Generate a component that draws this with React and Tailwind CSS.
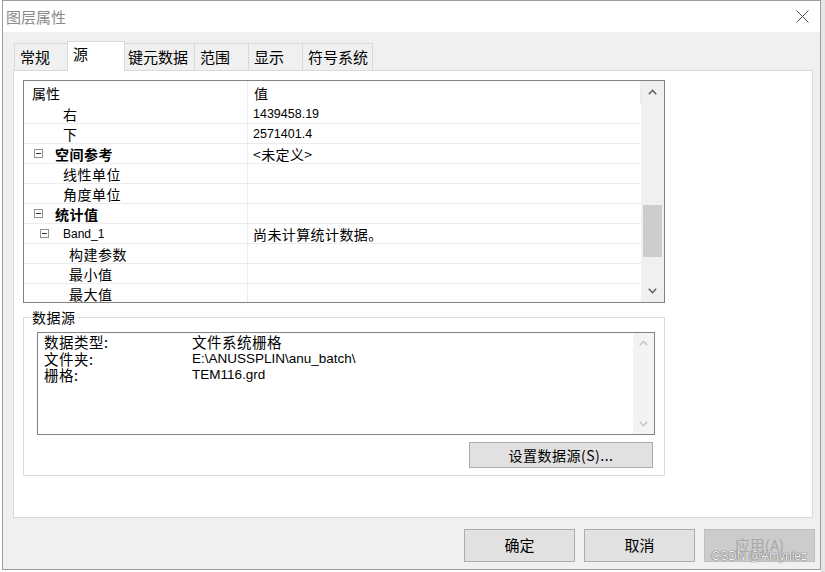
import React from "react";

const CJK = "font-['Noto_Sans_CJK_SC','Liberation_Sans',sans-serif]";
const LAT = "font-['Liberation_Sans','Noto_Sans_CJK_SC',sans-serif]";

function Chevron({ up, color = "#606060" }) {
  return (
    <svg width="9" height="6" viewBox="0 0 9 6">
      <path
        d={up ? "M0.8 5.2 L4.5 1.3 L8.2 5.2" : "M0.8 0.8 L4.5 4.7 L8.2 0.8"}
        fill="none"
        stroke={color}
        strokeWidth="1.6"
      />
    </svg>
  );
}

function MinusBox() {
  return (
    <div className="w-[9px] h-[9px] border border-[#919191] bg-white flex items-center justify-center shrink-0">
      <div className="w-[5px] h-px bg-[#333]" />
    </div>
  );
}

const rows = [
  { label: "右", pad: "pl-[39px]", value: "1439458.19", num: true },
  { label: "下", pad: "pl-[39px]", value: "2571401.4", num: true },
  { label: "空间参考", box: "pl-[10px]", gap: "ml-[12px]", bold: true, value: "<未定义>" },
  { label: "线性单位", pad: "pl-[39px]" },
  { label: "角度单位", pad: "pl-[39px]" },
  { label: "统计值", box: "pl-[10px]", gap: "ml-[12px]", bold: true },
  { label: "Band_1", box: "pl-[16px]", gap: "ml-[14px]", latin: true, value: "尚未计算统计数据。" },
  { label: "构建参数", pad: "pl-[45px]" },
  { label: "最小值", pad: "pl-[45px]" },
  { label: "最大值", pad: "pl-[45px]" },
];

function Row({ r }) {
  const labelCls = r.latin
    ? `${LAT} text-[12px]`
    : `${CJK} text-[14px] tracking-[0.5px] ${r.bold ? "font-bold" : ""}`;
  return (
    <div className="flex h-[20px] border-b border-[#ececec] shrink-0">
      <div
        className={`w-[224px] shrink-0 border-r border-[#ececec] flex items-center ${
          r.box ? r.box : r.pad
        }`}
      >
        {r.box ? <MinusBox /> : null}
        <span className={`${labelCls} leading-[20px] text-black ${r.box ? r.gap : ""}`}>
          {r.label}
        </span>
      </div>
      <div className="flex-1 flex items-center pl-[5px]">
        {r.value ? (
          <span
            className={`${
              r.num ? `${LAT} text-[12.5px]` : `${CJK} text-[14px] tracking-[0.4px]`
            } leading-[20px] text-black`}
          >
            {r.value}
          </span>
        ) : null}
      </div>
    </div>
  );
}

function Tab({ w, pl, selected, children }) {
  if (selected) {
    return (
      <div
        className={`${w} ${pl} h-[30px] -mb-px -ml-px bg-white border border-b-0 border-[#d9d9d9] flex items-start pt-[2px] ${CJK} text-[15px] leading-[20px] text-black relative z-10`}
      >
        {children}
      </div>
    );
  }
  return (
    <div
      className={`${w} ${pl} h-[27px] -ml-px bg-[#f0f0f0] border border-b-0 border-[#d9d9d9] flex items-center ${CJK} text-[15px] leading-[20px] text-black`}
    >
      {children}
    </div>
  );
}

function Btn({ children, disabled }) {
  return (
    <div
      className={`w-[111px] h-[33px] border flex items-center justify-center ${CJK} text-[15px] ${
        disabled
          ? "bg-[#cccccc] border-[#bfbfbf] text-[#a8a8a8]"
          : "bg-[#e1e1e1] border-[#adadad] text-black"
      }`}
    >
      {children}
    </div>
  );
}

export default function App() {
  return (
    <div className="w-[825px] h-[572px] bg-white flex overflow-hidden">
      <div className="ml-[2px] w-[819px] h-[570px] border border-[#9d9d9d] bg-[#f0f0f0] flex flex-col shrink-0 relative">
        {/* Title bar */}
        <div className="h-[31px] bg-white flex items-center justify-between shrink-0">
          <span className={`${CJK} text-[15px] text-[#8a8a8a] pl-[3px] leading-[20px]`}>
            图层属性
          </span>
          <svg width="13" height="13" viewBox="0 0 13 13" className="mr-[11px]">
            <path d="M0.5 0.5 L12.5 12.5 M12.5 0.5 L0.5 12.5" stroke="#555" strokeWidth="1" />
          </svg>
        </div>

        {/* Tabs */}
        <div className="h-[29px] mt-[9px] ml-[12px] flex items-end relative z-10 shrink-0">
          <Tab w="w-[54px]" pl="pl-[5px]">常规</Tab>
          <Tab w="w-[58px]" pl="pl-[5px]" selected>
            源
          </Tab>
          <Tab w="w-[71px]" pl="pl-[3px]">键元数据</Tab>
          <Tab w="w-[55px]" pl="pl-[5px]">范围</Tab>
          <Tab w="w-[55px]" pl="pl-[5px]">显示</Tab>
          <Tab w="w-[71px]" pl="pl-[5px]">符号系统</Tab>
        </div>

        {/* Panel */}
        <div className="ml-[10px] w-[800px] h-[448px] bg-white border border-[#d9d9d9] flex flex-col shrink-0">
          {/* Property grid */}
          <div className="mt-[9px] ml-[9px] w-[642px] h-[223px] border border-[#828282] flex shrink-0">
            <div className="flex-1 overflow-hidden bg-white flex flex-col">
              <div className="flex h-[23px] shrink-0">
                <div className="w-[224px] shrink-0 border-r border-[#ececec] pl-[8px] flex items-center">
                  <span className={`${CJK} text-[14px] leading-[20px] text-black`}>属性</span>
                </div>
                <div className="flex-1 pl-[6px] flex items-center border-r border-[#ececec]">
                  <span className={`${CJK} text-[14px] leading-[20px] text-black`}>值</span>
                </div>
              </div>
              {rows.map((r, i) => (
                <Row key={i} r={r} />
              ))}
            </div>
            <div className="w-[23px] bg-[#f0f0f0] flex flex-col items-center shrink-0">
              <div className="h-[22px] flex items-center justify-center">
                <Chevron up />
              </div>
              <div className="h-[102px]" />
              <div className="h-[52px] w-[19px] bg-[#cdcdcd]" />
              <div className="flex-1" />
              <div className="h-[22px] flex items-center justify-center">
                <Chevron />
              </div>
            </div>
          </div>

          {/* Data source group */}
          <div className="mt-[14px] ml-[9px] w-[642px] h-[159px] border border-[#dcdcdc] relative flex flex-col shrink-0">
            <span
              className={`absolute left-[7px] top-[-11px] bg-white px-[1px] ${CJK} text-[14px] tracking-[0.5px] leading-[20px] text-black`}
            >
              数据源
            </span>
            <div className="mt-[14px] ml-[13px] w-[618px] h-[103px] border border-[#828282] flex shrink-0">
              <div className="flex-1 pl-[6px] pt-[1px] flex flex-col">
                {[
                  ["数据类型:", "文件系统栅格", false],
                  ["文件夹:", "E:\\ANUSSPLIN\\anu_batch\\", true],
                  ["栅格:", "TEM116.grd", true],
                ].map(([k, v, lat], i) => (
                  <div key={i} className="flex h-[16.5px] items-center">
                    <span
                      className={`w-[148px] shrink-0 ${CJK} text-[14.5px] tracking-[0.5px] leading-[16px] text-black`}
                    >
                      {k}
                    </span>
                    <span
                      className={`${
                        lat ? `${LAT} text-[13.5px]` : `${CJK} text-[14.5px] tracking-[0.5px]`
                      } leading-[16px] text-black`}
                    >
                      {v}
                    </span>
                  </div>
                ))}
              </div>
              <div className="w-[21px] bg-[#f3f3f3] flex flex-col items-center justify-between py-[7px] shrink-0">
                <Chevron up color="#c4c4c4" />
                <Chevron color="#c4c4c4" />
              </div>
            </div>
            <div className="mt-[7px] self-end mr-[11px] w-[184px] h-[26px] bg-[#e1e1e1] border border-[#adadad] flex items-center justify-center">
              <span className={`${CJK} text-[14px] tracking-[0.5px] leading-[20px] text-black`}>
                设置数据源(S)...
              </span>
            </div>
          </div>
        </div>

        {/* Bottom buttons */}
        <div className="mt-[11px] mr-[5px] flex justify-end gap-[9px] shrink-0 relative">
          <Btn>确定</Btn>
          <Btn>取消</Btn>
          <Btn disabled>应用(A)</Btn>
          <span
            className={`absolute right-[8px] top-[20px] ${LAT} text-[12px] leading-[14px] text-[#f2f2f2] [text-shadow:0_0_1px_#555,0_0_1px_#555]`}
          >
            CSDN @Amyniez
          </span>
        </div>
      </div>
      <div className="flex-1 h-full bg-[#e6e6e6]" />
    </div>
  );
}
